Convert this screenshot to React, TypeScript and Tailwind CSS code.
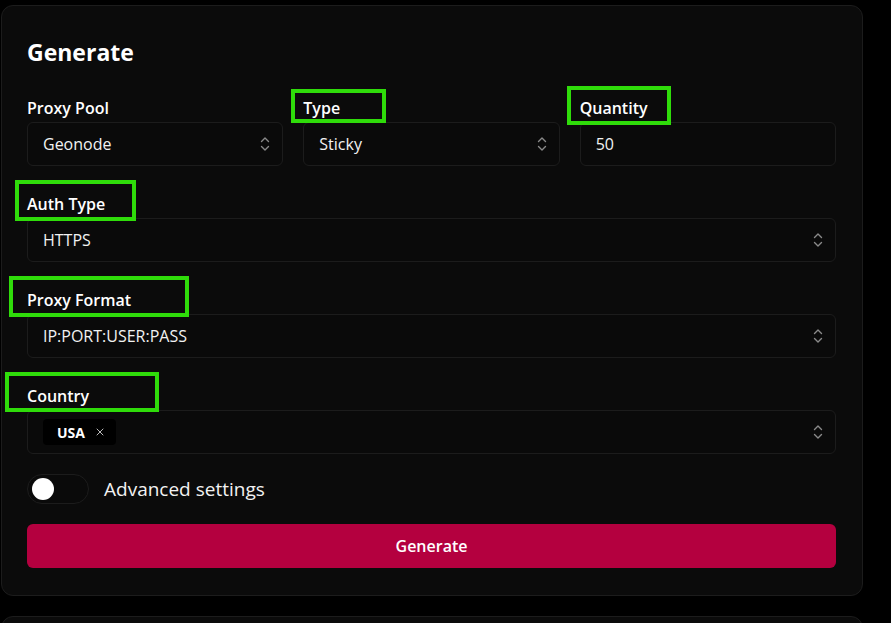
import { X } from 'lucide-react'

function Chevrons() {
  return (
    <svg width="10" height="16" viewBox="0 0 10 16" fill="none" stroke="#8a8a8a" strokeWidth="1.4" strokeLinecap="round" strokeLinejoin="round">
      <path d="M1.5 5.5L5 2l3.5 3.5" />
      <path d="M1.5 10.5L5 14l3.5-3.5" />
    </svg>
  )
}

function Label({ children }: { children: React.ReactNode }) {
  return <div className="text-[16px] leading-6 font-semibold text-white mb-0.5">{children}</div>
}

function Select({ value }: { value: React.ReactNode }) {
  return (
    <div className="h-11 flex items-center justify-between rounded-md border border-[#1c1c1c] bg-[#0a0a0a] pl-[15px] pr-3 text-[16px] text-[#f2f2f2]">
      <div className="flex items-center">{value}</div>
      <Chevrons />
    </div>
  )
}

function Annot({ className }: { className: string }) {
  return <div className={`absolute border-4 border-[#2fdc0a] pointer-events-none ${className}`} />
}

export default function App() {
  return (
    <div className="min-h-screen bg-black pl-px pt-[5px] font-['Open_Sans','Noto_Sans',sans-serif] relative overflow-hidden">
      <div className="w-[862px] rounded-xl border border-[#1c1c1c] bg-[#0b0b0b] pl-[25px] pr-[26px] pt-[30px] pb-[27px]">
        <h2 className="text-[23px] leading-8 font-bold text-white">Generate</h2>

        <div className="mt-7 grid grid-cols-3 gap-5">
          <div>
            <Label>Proxy Pool</Label>
            <Select value="Geonode" />
          </div>
          <div>
            <Label>Type</Label>
            <Select value="Sticky" />
          </div>
          <div>
            <Label>Quantity</Label>
            <div className="h-11 flex items-center rounded-md border border-[#1c1c1c] bg-[#0a0a0a] px-[15px] text-[16px] text-[#f2f2f2]">
              50
            </div>
          </div>
        </div>

        <div className="mt-[26px]">
          <Label>Auth Type</Label>
          <Select value="HTTPS" />
        </div>

        <div className="mt-[26px]">
          <Label>Proxy Format</Label>
          <Select value="IP:PORT:USER:PASS" />
        </div>

        <div className="mt-[26px]">
          <Label>Country</Label>
          <Select
            value={
              <span className="flex items-center gap-[9px] rounded bg-black pl-[14px] pr-[10px] h-[26px] text-[14px] font-bold text-white">
                USA
                <X className="w-3 h-3 text-[#bbbbbb]" strokeWidth={2} />
              </span>
            }
          />
        </div>

        <div className="mt-5 flex items-center gap-[15px]">
          <div className="w-[62px] h-[30px] rounded-full border border-[#1c1c1c] bg-[#0a0a0a] flex items-center px-1">
            <div className="w-[22px] h-[22px] rounded-full bg-white" />
          </div>
          <span className="text-[19px] text-[#f2f2f2]">Advanced settings</span>
        </div>

        <button className="mt-5 w-full h-11 rounded-md bg-[#b4003f] text-white text-[16px] font-semibold">
          Generate
        </button>
      </div>

      <div className="mt-5 w-[862px] h-24 rounded-xl border border-[#1c1c1c] bg-[#0b0b0b]" />

      <Annot className="left-[291px] top-[89px] w-[95px] h-[34px]" />
      <Annot className="left-[567px] top-[86px] w-[104px] h-[39px]" />
      <Annot className="left-[15px] top-[180px] w-[121px] h-[41px]" />
      <Annot className="left-[9px] top-[276px] w-[180px] h-[41px]" />
      <Annot className="left-[5px] top-[372px] w-[154px] h-[40px]" />
    </div>
  )
}
